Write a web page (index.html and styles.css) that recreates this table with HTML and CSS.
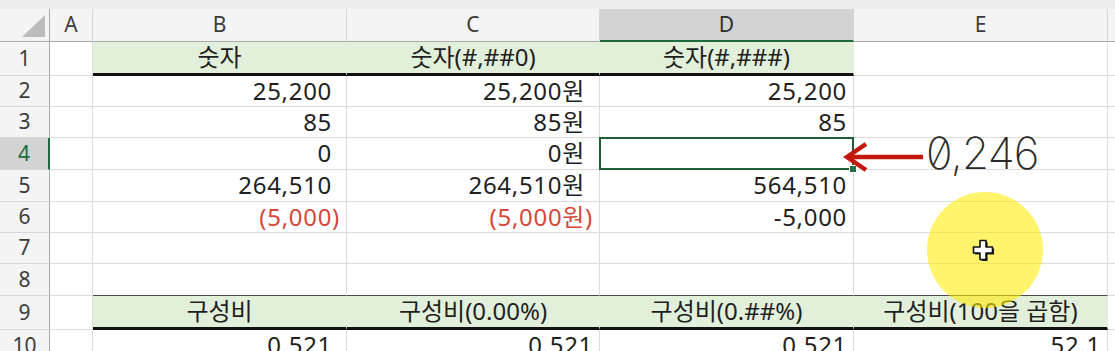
FILE: index.html
```html
<!DOCTYPE html>
<html lang="ko">
<head>
<meta charset="utf-8">
<title>숫자 서식</title>
<link rel="stylesheet" href="styles.css">
</head>
<body>
<div class="sheet">
  <div class="strip"></div>
  <div class="grid">
    <div class="cell corner"><div class="tri"></div></div>
    <div class="cell ch">A</div>
    <div class="cell ch">B</div>
    <div class="cell ch">C</div>
    <div class="cell ch sel">D</div>
    <div class="cell ch">E</div>
    <div class="cell ch"></div>

    <div class="cell rh">1</div>
    <div class="cell"></div>
    <div class="cell g thick ctr">숫자</div>
    <div class="cell g thick ctr">숫자(#,##0)</div>
    <div class="cell g thick ctr">숫자(#,###)</div>
    <div class="cell"></div>
    <div class="cell"></div>

    <div class="cell rh">2</div>
    <div class="cell"></div>
    <div class="cell r"><span class="pad">25,200</span></div>
    <div class="cell r"><span class="pad">25,200원</span></div>
    <div class="cell r">25,200</div>
    <div class="cell"></div>
    <div class="cell"></div>

    <div class="cell rh">3</div>
    <div class="cell"></div>
    <div class="cell r"><span class="pad">85</span></div>
    <div class="cell r"><span class="pad">85원</span></div>
    <div class="cell r">85</div>
    <div class="cell"></div>
    <div class="cell"></div>

    <div class="cell rh rsel">4</div>
    <div class="cell"></div>
    <div class="cell r"><span class="pad">0</span></div>
    <div class="cell r"><span class="pad">0원</span></div>
    <div class="cell r active"><div class="selbox"><div class="handle"></div></div></div>
    <div class="cell"></div>
    <div class="cell"></div>

    <div class="cell rh">5</div>
    <div class="cell"></div>
    <div class="cell r"><span class="pad">264,510</span></div>
    <div class="cell r"><span class="pad">264,510원</span></div>
    <div class="cell r">564,510</div>
    <div class="cell"></div>
    <div class="cell"></div>

    <div class="cell rh">6</div>
    <div class="cell"></div>
    <div class="cell r neg">(5,000)</div>
    <div class="cell r neg">(5,000원)</div>
    <div class="cell r">-5,000</div>
    <div class="cell"></div>
    <div class="cell"></div>

    <div class="cell rh">7</div>
    <div class="cell"></div>
    <div class="cell"></div>
    <div class="cell"></div>
    <div class="cell"></div>
    <div class="cell"></div>
    <div class="cell"></div>

    <div class="cell rh">8</div>
    <div class="cell"></div>
    <div class="cell above"></div>
    <div class="cell above"></div>
    <div class="cell above"></div>
    <div class="cell above"></div>
    <div class="cell"></div>

    <div class="cell rh">9</div>
    <div class="cell"></div>
    <div class="cell g thick ctr">구성비</div>
    <div class="cell g thick ctr">구성비(0.00%)</div>
    <div class="cell g thick ctr">구성비(0.##%)</div>
    <div class="cell g thick ctr">구성비(100을 곱함)</div>
    <div class="cell"></div>

    <div class="cell rh">10</div>
    <div class="cell"></div>
    <div class="cell r"><span class="pad">0.521</span></div>
    <div class="cell r">0.521</div>
    <div class="cell r">0.521</div>
    <div class="cell r">52.1</div>
    <div class="cell"></div>
  </div>

  <svg class="arrow" width="90" height="34" viewBox="0 0 90 34">
    <path d="M8 17 H82" stroke="#c4170d" stroke-width="4.5" fill="none"/>
    <path d="M25 4 L6 17 L25 30" stroke="#c4170d" stroke-width="4.5" fill="none" stroke-linejoin="miter"/>
  </svg>
  <div class="note">0,246</div>

  <div class="spot"></div>
  <svg class="cursor" width="26" height="26" viewBox="0 0 26 26">
    <path d="M9 2.5h6v6.5h6.5v6h-6.5v6.5h-6v-6.5h-6.5v-6h6.5z" fill="#222" transform="translate(1.6 1.6)"/>
    <path d="M9 2.5h6v6.5h6.5v6h-6.5v6.5h-6v-6.5h-6.5v-6h6.5z" fill="#fff" stroke="#111" stroke-width="1.6" stroke-linejoin="round"/>
  </svg>
</div>
</body>
</html>
```

FILE: styles.css
```css
body {
  margin: 0;
  background: #fff;
  font-family: "Noto Sans", "Noto Sans CJK KR", sans-serif;
}

.sheet {
  position: relative;
  width: 1115px;
  height: 351px;
  overflow: hidden;
}

.strip {
  height: 9px;
  background: #ededed;
}

.grid {
  display: grid;
  grid-template-columns: 50px 43px 254px 253px 254px 254px 1fr;
  grid-template-rows: 33px 34px 31px 31px 32px 32px 31px 31px 32px 34px 32px;
}

.cell {
  box-sizing: border-box;
  border-right: 1px solid #dcdcdc;
  border-bottom: 1px solid #dcdcdc;
  display: flex;
  align-items: center;
  padding: 0 6px;
  font-family: "Noto Sans", "Noto Sans CJK KR", sans-serif;
  font-size: 24px;
  line-height: 1.2;
  color: #1f1f1f;
  white-space: nowrap;
}

.ch {
  background: #f4f4f4;
  border-bottom-color: #a9a9a9;
  border-right-color: #d6d6d6;
  justify-content: center;
  font-size: 21px;
  color: #3c3c3c;
}

.ch.sel {
  background: #d3d3d3;
  border-bottom: 2px solid #1f6b3d;
  color: #2f2f2f;
}

.corner {
  background: #f4f4f4;
  border-right-color: #a9a9a9;
  border-bottom-color: #a9a9a9;
  justify-content: flex-end;
  align-items: flex-end;
  padding: 0 4px 4px 0;
}

.tri {
  width: 23px;
  height: 22px;
  background: #bcbcbc;
  clip-path: polygon(100% 0, 100% 100%, 0 100%);
}

.rh {
  background: #f4f4f4;
  border-right-color: #a9a9a9;
  border-bottom-color: #d8d8d8;
  justify-content: center;
  font-size: 21px;
  color: #3c3c3c;
  padding: 0;
}

.rh.rsel {
  background: #d3d3d3;
  border-right: 2px solid #1f6b3d;
  color: #1f6b3d;
}

.g {
  background: #e2efda;
  border-right-color: #e2efda;
}

.thick {
  border-bottom: 3px solid #111;
}

.above {
  border-bottom-color: #4a4a4a;
}

.ctr {
  justify-content: center;
}

.r {
  justify-content: flex-end;
  letter-spacing: 0.7px;
}

.pad {
  padding-right: 8px;
}

.neg {
  color: #d5473a;
}

.active {
  position: relative;
}

.selbox {
  position: absolute;
  left: -1px;
  top: -1px;
  right: -1px;
  bottom: -1px;
  border: 2px solid #1d5e37;
}

.handle {
  position: absolute;
  right: -5px;
  bottom: -5px;
  width: 6px;
  height: 6px;
  background: #217346;
  border: 1px solid #fff;
}

.arrow {
  position: absolute;
  left: 841px;
  top: 140px;
}

.note {
  position: absolute;
  left: 926px;
  top: 128px;
  font-family: Inter, "Noto Sans", sans-serif;
  font-weight: 200;
  font-size: 44px;
  line-height: 50px;
  letter-spacing: -0.8px;
  color: #2a2a2a;
  font-variant-numeric: slashed-zero;
}

.spot {
  position: absolute;
  left: 927px;
  top: 192px;
  width: 116px;
  height: 116px;
  border-radius: 50%;
  background: rgba(255, 236, 0, 0.58);
}

.cursor {
  position: absolute;
  left: 971px;
  top: 238px;
}
```
